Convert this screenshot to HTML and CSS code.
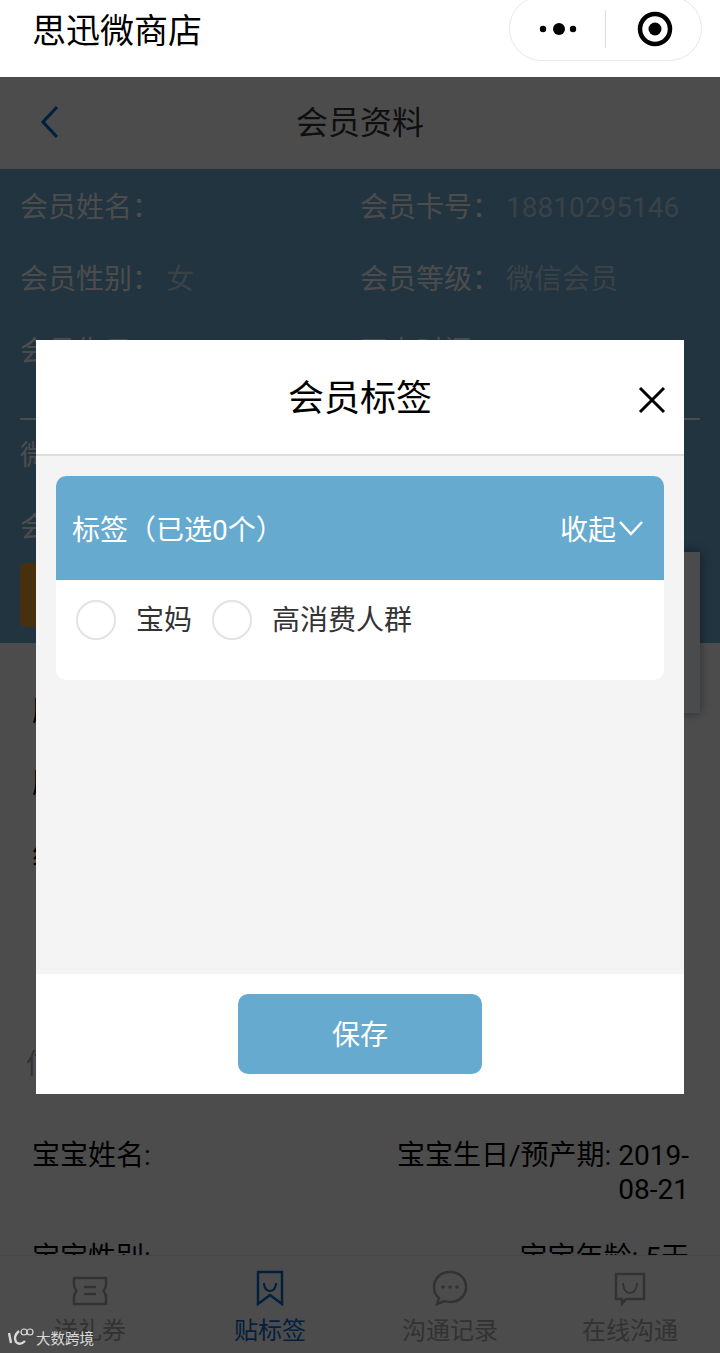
FILE: index.html
```html
<!DOCTYPE html>
<html lang="zh-CN">
<head>
    <meta charset="UTF-8">
    <meta name="viewport" content="width=device-width, initial-scale=1.0">
    <title>会员资料</title>
    <link rel="stylesheet" href="styles.css">
</head>
<body>
    <!-- Mini program top bar -->
    <div class="topbar">
        <div class="shop-name">思迅微商店</div>
        <div class="capsule">
            <svg class="capsule-more" width="50" height="16" viewBox="0 0 50 16">
                <circle cx="5" cy="8" r="3.2"/>
                <circle cx="21" cy="8" r="6"/>
                <circle cx="35" cy="8" r="3.2"/>
            </svg>
            <span class="capsule-line"></span>
            <svg class="capsule-close" width="36" height="36" viewBox="0 0 36 36">
                <circle cx="18" cy="18" r="15" fill="none" stroke="#000" stroke-width="4.5"/>
                <circle cx="18" cy="18" r="6.5"/>
            </svg>
        </div>
    </div>

    <div class="page">
        <div class="page-head">
            <svg class="back" width="20" height="34" viewBox="0 0 20 34">
                <path d="M17 2 L3 17 L17 32" fill="none" stroke="#0a6ad0" stroke-width="3.2"/>
            </svg>
            <div class="page-title">会员资料</div>
        </div>

        <!-- Member info -->
        <div class="member">
            <div class="member-grid">
                <div class="cell">会员姓名：</div>
                <div class="cell">会员卡号：<span class="val">18810295146</span></div>
                <div class="cell">会员性别：<span class="val">女</span></div>
                <div class="cell">会员等级：<span class="val">微信会员</span></div>
                <div class="cell">会员生日：</div>
                <div class="cell">开卡时间：</div>
            </div>
            <div class="member-line"></div>
            <div class="cell">微信昵称：</div>
            <div class="cell">会员标签：</div>
            <div class="orange-btn"></div>
        </div>

        <div class="rows">
            <div class="row">历史消费：</div>
            <div class="row">历史积分：</div>
            <div class="row">线下消费：</div>
        </div>

        <div class="section-title">信息</div>

        <div class="baby-grid">
            <div class="baby-left">宝宝姓名:</div>
            <div class="baby-right">宝宝生日/预产期: 2019-08-21</div>
            <div class="baby-left">宝宝性别:</div>
            <div class="baby-right">宝宝年龄: 5天</div>
        </div>

        <div class="float-card"></div>
    </div>

    <!-- Bottom tabs -->
    <div class="tabbar">
        <div class="tab">
            <svg width="38" height="30" viewBox="0 0 38 30" fill="none" stroke="#a8a8a8" stroke-width="2.5">
                <path d="M3 2 H35 V9 Q35 12 32.5 15 Q35 18 35 21 V28 H3 V21 Q3 18 5.5 15 Q3 12 3 9 Z"/>
                <path d="M13 11 H25 M13 18 H25"/>
            </svg>
            <span>送礼券</span>
        </div>
        <div class="tab active">
            <svg width="28" height="36" viewBox="0 0 28 36" fill="none" stroke="#0a6ad0" stroke-width="2.5">
                <path d="M2 2 H26 V34 L14 25 L2 34 Z"/>
                <path d="M8 13 V14 Q9 21 14 21 Q19 21 20 14 V13" stroke-width="2"/>
            </svg>
            <span>贴标签</span>
        </div>
        <div class="tab">
            <svg width="36" height="36" viewBox="0 0 36 36" fill="#a8a8a8" stroke="none">
                <path d="M18 2 C8 2 2 9 2 17 C2 22 4 26 7 28 L5 34 L13 31 Q15 32 18 32 C28 32 34 25 34 17 C34 9 28 2 18 2 Z" fill="none" stroke="#a8a8a8" stroke-width="2.5"/>
                <circle cx="11" cy="17" r="1.8"/>
                <circle cx="18" cy="17" r="1.8"/>
                <circle cx="25" cy="17" r="1.8"/>
            </svg>
            <span>沟通记录</span>
        </div>
        <div class="tab">
            <svg width="32" height="34" viewBox="0 0 32 34" fill="none" stroke="#a8a8a8" stroke-width="2.5">
                <path d="M2 2 H30 V27 H12 L8 32 V27 H2 Z"/>
                <path d="M9 11 V12 Q10 21 16 21 Q22 21 23 12 V11" stroke-width="2"/>
            </svg>
            <span>在线沟通</span>
        </div>
    </div>

    <div class="overlay"></div>

    <!-- Tag dialog -->
    <div class="modal">
        <div class="modal-head">
            <div class="modal-title">会员标签</div>
            <svg class="modal-close" width="28" height="28" viewBox="0 0 28 28">
                <path d="M2 2 L26 26 M26 2 L2 26" stroke="#000" stroke-width="3"/>
            </svg>
        </div>
        <div class="modal-body">
            <div class="panel">
                <div class="panel-head">
                    <span>标签（已选0个）</span>
                    <span class="fold">收起
                        <svg width="26" height="16" viewBox="0 0 26 16">
                            <path d="M2 2 L13 14 L24 2" fill="none" stroke="#fff" stroke-width="2.5"/>
                        </svg>
                    </span>
                </div>
                <div class="panel-tags">
                    <div class="radio"></div>
                    <span class="tag-name">宝妈</span>
                    <div class="radio"></div>
                    <span class="tag-name">高消费人群</span>
                </div>
            </div>
        </div>
        <div class="modal-foot">
            <div class="save-btn">保存</div>
        </div>
    </div>

    <!-- Watermark -->
    <div class="watermark">
        <svg width="28" height="22" viewBox="0 0 28 22" fill="none" stroke="#d8d8d8" stroke-width="2.4">
            <path d="M2 7 L4 17"/>
            <path d="M12 5 Q6 10 9 16 Q13 20 18 15"/>
            <circle cx="17" cy="6" r="3" stroke-width="1.2"/>
            <circle cx="23" cy="6" r="3" stroke-width="1.2"/>
        </svg>
        <span>大数跨境</span>
    </div>
</body>
</html>
```

FILE: styles.css
```css
* {
    margin: 0;
    padding: 0;
    box-sizing: border-box;
}

body, html {
    width: 100%;
    height: 100%;
    overflow: hidden;
    font-family: Roboto, "Noto Sans CJK SC", sans-serif;
    color: #000;
    background: #fff;
}

body {
    position: relative;
    display: flex;
    flex-direction: column;
}

/* Top bar */
.topbar {
    height: 77px;
    flex-shrink: 0;
    display: flex;
    justify-content: space-between;
    align-items: flex-start;
    padding: 0 18px 0 32px;
}

.shop-name {
    font-size: 34px;
    line-height: 62px;
}

.capsule {
    width: 193px;
    height: 65px;
    margin-top: -4px;
    border: 1px solid #e8e8e8;
    border-radius: 33px;
    display: flex;
    align-items: center;
    padding-left: 28px;
}

.capsule-line {
    width: 1px;
    height: 38px;
    margin: 0 31px 0 17px;
    background: #ddd;
}

/* Page under the dialog */
.page {
    position: relative;
    flex: 1;
    min-height: 0;
    overflow: hidden;
}

.page-head {
    height: 92px;
    display: flex;
    align-items: center;
    justify-content: center;
    position: relative;
    padding-bottom: 6px;
}

.back {
    position: absolute;
    left: 40px;
    top: 28px;
}

.page-title {
    font-size: 32px;
    color: #333;
}

.member {
    height: 474px;
    padding: 3px 20px 16px;
    background: #6eadd5;
    font-size: 28px;
    color: #fff;
}

.member-grid {
    display: grid;
    grid-template-columns: 340px 340px;
}

.cell {
    height: 72px;
    line-height: 72px;
    white-space: nowrap;
}

.val {
    margin-left: 6px;
    color: rgba(255, 255, 255, 0.6);
}

.member-line {
    height: 2px;
    margin-top: 30px;
    background: #fff;
}

.orange-btn {
    width: 200px;
    height: 64px;
    margin-top: -1px;
    border-radius: 6px;
    background: #f0a030;
}

.rows {
    padding: 33px 33px 0 32px;
    font-size: 28px;
}

.row {
    height: 72px;
    line-height: 72px;
}

.section-title {
    height: 72px;
    line-height: 72px;
    margin-top: 137px;
    padding-left: 26px;
    font-size: 28px;
    color: #aaa;
}

.baby-grid {
    display: grid;
    grid-template-columns: 327px 327px;
    justify-content: space-between;
    margin-top: 38px;
    padding: 0 31px 0 32px;
    font-size: 28px;
    line-height: 34px;
    row-gap: 34px;
}

.baby-right {
    text-align: right;
}

.float-card {
    position: absolute;
    right: 20px;
    top: 475px;
    width: 220px;
    height: 161px;
    background: #f4fbff;
    box-shadow: 0 0 10px rgba(0, 0, 0, 0.4);
}

/* Bottom tabs */
.tabbar {
    height: 98px;
    flex-shrink: 0;
    position: relative;
    display: grid;
    grid-template-columns: repeat(4, 1fr);
    background: #fff;
    border-top: 1px solid #eee;
}

.tab {
    display: flex;
    flex-direction: column;
    align-items: center;
    justify-content: flex-end;
    font-size: 24px;
    line-height: 32px;
    color: #a8a8a8;
    padding-bottom: 6px;
    gap: 9px;
}

.tab.active {
    color: #0a6ad0;
}

/* Overlay and dialog */
.overlay {
    position: absolute;
    left: 0;
    right: 0;
    top: 77px;
    bottom: 0;
    background: rgba(0, 0, 0, 0.7);
}

.modal {
    position: absolute;
    left: 36px;
    top: 340px;
    width: 648px;
    height: 754px;
    display: flex;
    flex-direction: column;
    background: #fff;
}

.modal-head {
    height: 116px;
    flex-shrink: 0;
    position: relative;
    border-bottom: 2px solid #ddd;
    text-align: center;
}

.modal-title {
    font-size: 36px;
    line-height: 118px;
}

.modal-close {
    position: absolute;
    right: 18px;
    top: 46px;
}

.modal-body {
    flex: 1;
    padding: 20px;
    background: #f4f4f4;
}

.panel {
    border-radius: 10px;
    overflow: hidden;
    background: #fff;
}

.panel-head {
    height: 104px;
    padding: 0 20px 0 16px;
    display: flex;
    justify-content: space-between;
    align-items: center;
    background: #66aacf;
    color: #fff;
    font-size: 28px;
}

.fold {
    display: flex;
    align-items: center;
    gap: 2px;
}

.panel-tags {
    height: 100px;
    padding: 20px 0 0 20px;
    display: flex;
    align-items: flex-start;
    font-size: 28px;
    line-height: 42px;
    color: #333;
}

.radio {
    width: 40px;
    height: 40px;
    border: 2px solid #e2e2e2;
    border-radius: 50%;
    flex-shrink: 0;
}

.tag-name {
    margin: 0 20px;
}

.modal-foot {
    height: 120px;
    flex-shrink: 0;
    padding-top: 20px;
    display: flex;
    justify-content: center;
}

.save-btn {
    width: 244px;
    height: 80px;
    border-radius: 10px;
    background: #66aacf;
    color: #fff;
    font-size: 28px;
    line-height: 84px;
    text-align: center;
}

.watermark {
    position: absolute;
    left: 7px;
    bottom: 5px;
    display: flex;
    align-items: center;
    gap: 1px;
    font-size: 14.5px;
    color: #d8d8d8;
}
```
